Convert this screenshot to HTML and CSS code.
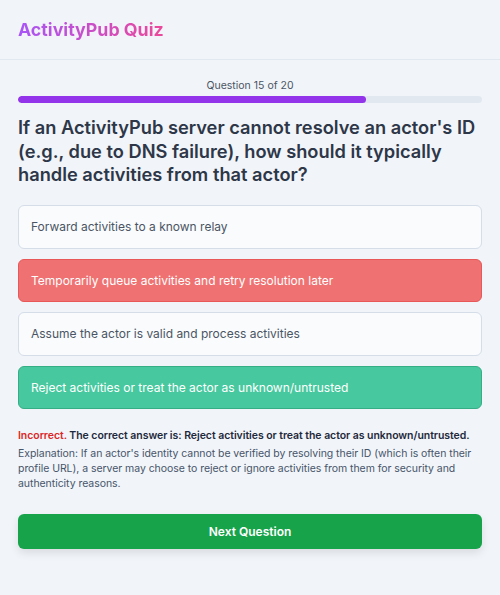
FILE: index.html
```html
<!DOCTYPE html>
<html lang="en">
<head>
  <meta charset="UTF-8" />
  <meta name="viewport" content="width=device-width, initial-scale=1.0" />
  <title>ActivityPub Quiz</title>
  <link rel="stylesheet" href="styles.css">
</head>
<body>
  <header class="topbar">
    <h1 class="brand">ActivityPub Quiz</h1>
  </header>

  <main class="quiz">
    <div class="progress">
      <p class="progress-label">Question 15 of 20</p>
      <div class="progress-track">
        <div class="progress-fill" style="width: 75%"></div>
      </div>
    </div>

    <h2 class="question">If an ActivityPub server cannot resolve an actor's ID (e.g., due to DNS failure), how should it typically handle activities from that actor?</h2>

    <div class="options">
      <button class="option">Forward activities to a known relay</button>
      <button class="option wrong">Temporarily queue activities and retry resolution later</button>
      <button class="option">Assume the actor is valid and process activities</button>
      <button class="option right">Reject activities or treat the actor as unknown/untrusted</button>
    </div>

    <div class="feedback">
      <p class="verdict"><span class="bad">Incorrect.</span> The correct answer is: Reject activities or treat the actor as unknown/untrusted.</p>
      <p class="explanation">Explanation: If an actor's identity cannot be verified by resolving their ID (which is often their profile URL), a server may choose to reject or ignore activities from them for security and authenticity reasons.</p>
    </div>

    <button class="next">Next Question</button>
  </main>
</body>
</html>
```

FILE: styles.css
```css
:root {
  --bg: #f1f4f9;
  --line: #e2e8f0;
  --text: #334155;
  --muted: #4b5563;
  --purple: #9333ea;
  --green: #16a34a;
}

* {
  box-sizing: border-box;
}

body {
  margin: 0;
  font-family: Inter, 'Noto Sans', sans-serif;
  background-color: var(--bg);
  color: var(--text);
}

.topbar {
  height: 60px;
  padding: 0 18px;
  display: flex;
  align-items: center;
  border-bottom: 1px solid var(--line);
}

.brand {
  margin: 0;
  font-size: 17.8px;
  font-weight: 700;
  background: linear-gradient(90deg, #a855f7, #ec4899);
  -webkit-background-clip: text;
  background-clip: text;
  color: transparent;
}

.quiz {
  padding: 19px 18px;
}

.progress-label {
  margin: 0 0 3px;
  text-align: center;
  font-size: 10.5px;
  line-height: 14px;
  color: var(--muted);
}

.progress-track {
  height: 7px;
  border-radius: 4px;
  background: var(--line);
  overflow: hidden;
}

.progress-fill {
  height: 100%;
  border-radius: 4px;
  background: var(--purple);
}

.question {
  margin: 13px 0 18.5px;
  font-size: 18.25px;
  line-height: 23.5px;
  font-weight: 600;
  color: #2d3748;
}

.options {
  display: flex;
  flex-direction: column;
  gap: 10px;
}

.option {
  text-align: left;
  font-family: inherit;
  font-size: 12px;
  line-height: 17.5px;
  padding: 12px;
  border-radius: 6px;
  border: 1px solid #d5dde8;
  background: #f9fbfd;
  color: var(--muted);
  cursor: pointer;
}

.option.wrong {
  background: #f07171;
  border-color: #e85858;
  color: #fff;
}

.option.right {
  background: #47c89e;
  border-color: #36ae85;
  color: #fff;
}

.feedback {
  margin-top: 19px;
  font-size: 10.5px;
  line-height: 15px;
  letter-spacing: -0.05px;
}

.feedback p {
  margin: 0;
}

.verdict {
  font-weight: 600;
  color: #1e293b;
  margin-bottom: 2.5px !important;
}

.bad {
  color: #dc2626;
}

.explanation {
  color: #475569;
}

.next {
  display: block;
  width: 100%;
  margin-top: 23.5px;
  height: 35px;
  border: none;
  border-radius: 6px;
  background: var(--green);
  color: #fff;
  font-family: inherit;
  font-size: 12px;
  font-weight: 600;
  box-shadow: 0 4px 8px rgba(0, 0, 0, 0.1);
  cursor: pointer;
}
```
